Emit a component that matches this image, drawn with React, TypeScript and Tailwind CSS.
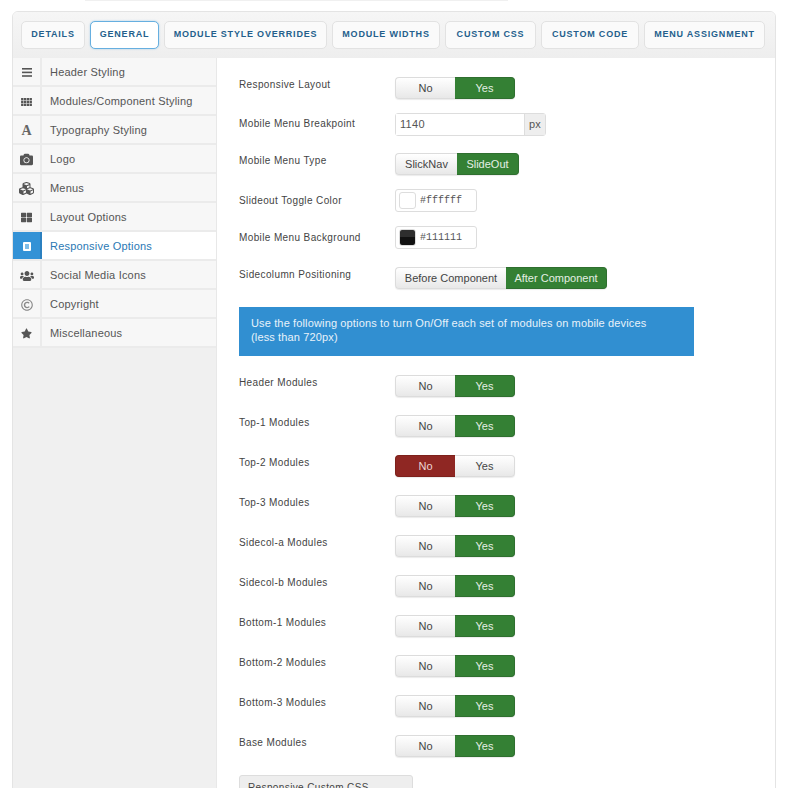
import { FaCamera, FaCubes, FaRegCopyright, FaStar, FaThLarge, FaUsers } from "react-icons/fa";

const TABS = [
  { label: "DETAILS", width: "w-[64px]" },
  { label: "GENERAL", width: "w-[69px]", active: true },
  { label: "MODULE STYLE OVERRIDES", width: "w-[163px]" },
  { label: "MODULE WIDTHS", width: "w-[108px]" },
  { label: "CUSTOM CSS", width: "w-[91px]" },
  { label: "CUSTOM CODE", width: "w-[98px]" },
  { label: "MENU ASSIGNMENT", width: "w-[121px]" },
];

function BarsIcon() {
  return (
    <svg width="10" height="9" viewBox="0 0 10 9" fill="currentColor">
      <rect y="0" width="10" height="1.6" />
      <rect y="3.6" width="10" height="1.6" />
      <rect y="7.2" width="10" height="1.6" />
    </svg>
  );
}

function GridIcon() {
  const cells = [];
  for (let row = 0; row < 3; row++) {
    for (let col = 0; col < 4; col++) {
      cells.push(<rect key={`${row}-${col}`} x={col * 3} y={row * 3} width="2.5" height="2.5" />);
    }
  }
  return (
    <svg width="11" height="8" viewBox="0 0 11.5 8.5" fill="currentColor">
      {cells}
    </svg>
  );
}

const MENU = [
  { label: "Header Styling", icon: <BarsIcon /> },
  { label: "Modules/Component Styling", icon: <GridIcon /> },
  { label: "Typography Styling", icon: <span className="font-['Liberation_Serif',serif] text-[14px] leading-none font-bold text-[#666666]">A</span> },
  { label: "Logo", icon: <FaCamera className="h-[13px] w-[13px]" /> },
  { label: "Menus", icon: <FaCubes className="h-[15px] w-[15px]" /> },
  { label: "Layout Options", icon: <FaThLarge className="h-[11px] w-[11px]" /> },
  { label: "Responsive Options", active: true, icon: <span className="block h-[9px] w-[8px] rounded-[1px] border-2 border-white bg-[#7fbde8]" /> },
  { label: "Social Media Icons", icon: <FaUsers className="h-[14px] w-[14px]" /> },
  { label: "Copyright", icon: <FaRegCopyright className="h-[12px] w-[12px] text-[#888888]" /> },
  { label: "Miscellaneous", icon: <FaStar className="h-[11px] w-[11px]" /> },
];

const MODULES = [
  { label: "Header Modules" },
  { label: "Top-1 Modules" },
  { label: "Top-2 Modules", off: true },
  { label: "Top-3 Modules" },
  { label: "Sidecol-a Modules" },
  { label: "Sidecol-b Modules" },
  { label: "Bottom-1 Modules" },
  { label: "Bottom-2 Modules" },
  { label: "Bottom-3 Modules" },
  { label: "Base Modules" },
];

const segBase = "flex h-[22px] items-center justify-center border text-[11px] whitespace-nowrap shadow-[0_1px_1px_rgba(0,0,0,0.08)]";
const segOff = "border-[#dcdcdc] bg-gradient-to-b from-[#ffffff] to-[#e8e8e8] text-[#444444]";
const segGreen = "border-[#2f6f2f] bg-[#348034] text-[#e4efe4]";
const segRed = "border-[#7d211b] bg-[#8f2723] text-[#ecd6d4]";

function Segmented({ left, right, leftW, rightW, on = "right", onClass = segGreen }: { left: string; right: string; leftW: string; rightW: string; on?: "left" | "right"; onClass?: string }) {
  return (
    <div className="flex">
      <div className={`${segBase} ${leftW} rounded-l-[4px] border-r-0 ${on === "left" ? onClass : segOff}`}>{left}</div>
      <div className={`${segBase} ${rightW} rounded-r-[4px] border-l-0 ${on === "right" ? onClass : segOff}`}>{right}</div>
    </div>
  );
}

function YesNo({ off }: { off?: boolean }) {
  return <Segmented left="No" right="Yes" leftW="w-[60px]" rightW="w-[60px]" on={off ? "left" : "right"} onClass={off ? segRed : segGreen} />;
}

function Label({ children, offset = "pt-[1px]" }: { children: string; offset?: string }) {
  return <div className={`w-[156px] shrink-0 text-[10px] leading-[13px] tracking-[0.38px] whitespace-nowrap text-[#444444] ${offset}`}>{children}</div>;
}

function ColorField({ swatch, value }: { swatch: string; value: string }) {
  return (
    <div className="flex h-[23px] w-[82px] items-center gap-[4px] rounded-[3px] border border-[#dddddd] bg-white pl-[3px]">
      <span className={`h-[17px] w-[17px] rounded-[3px] border border-[#dddddd] ${swatch}`} />
      <span className="font-['Liberation_Mono',monospace] text-[10px] text-[#555555]">{value}</span>
    </div>
  );
}

export default function App() {
  return (
    <div className="h-[788px] overflow-hidden bg-white font-['Liberation_Sans',Arial,sans-serif]">
      <div className="ml-[85px] h-[1px] w-[423px] bg-[#f0f0f0]" />
      <div className="mx-[12px] mt-[10px] h-[900px] rounded-t-[6px] border border-[#e4e4e4]">
        <div className="flex h-[46px] items-start gap-[5px] rounded-t-[5px] bg-gradient-to-b from-[#f6f6f6] to-[#eeeeee] pt-[9px] pl-[8px]">
          {TABS.map((tab) => (
            <div
              key={tab.label}
              className={`flex h-[28px] ${tab.width} items-center justify-center rounded-[5px] border text-[9px] font-bold tracking-[0.8px] whitespace-nowrap text-[#245f8c] ${tab.active ? "border-[#66afe0] bg-white shadow-[0_0_2px_rgba(102,175,224,0.6)]" : "border-[#e2e2e2] bg-[#fafafa]"}`}
            >
              {tab.label}
            </div>
          ))}
        </div>
        <div className="flex h-[854px]">
          <div className="w-[204px] shrink-0 border-r border-[#e8e8e8] bg-[#f0f0f0]">
            {MENU.map((item) => (
              <div key={item.label} className={`flex h-[29px] border-b-2 border-[#ebebeb] text-[11px] ${item.active ? "bg-white text-[#2a78b4]" : "bg-[#f7f7f7] text-[#555555]"}`}>
                <div className={`flex w-[29px] shrink-0 items-center justify-center border-r-2 pt-[2px] ${item.active ? "border-[#2b80c0] bg-[#3392d6]" : "border-[#ebebeb] text-[#555555]"}`}>
                  {item.icon}
                </div>
                <div className="flex items-center pt-[2px] pl-[8px] tracking-[0.2px] whitespace-nowrap">{item.label}</div>
              </div>
            ))}
          </div>
          <div className="min-w-0 flex-1 pt-[19px] pl-[22px]">
            <div className="flex h-[22px]">
              <Label>Responsive Layout</Label>
              <YesNo />
            </div>
            <div className="mt-[14px] flex">
              <Label offset="pt-[4px]">Mobile Menu Breakpoint</Label>
              <div className="flex h-[23px] rounded-[3px] border border-[#dddddd] text-[11px] tracking-[0.3px] text-[#555555]">
                <div className="flex w-[128px] items-center bg-white pl-[4px]">1140</div>
                <div className="flex w-[21px] items-center justify-center border-l border-[#dddddd] bg-[#eeeeee]">px</div>
              </div>
            </div>
            <div className="mt-[17px] flex">
              <Label>Mobile Menu Type</Label>
              <Segmented left="SlickNav" right="SlideOut" leftW="w-[62px]" rightW="w-[62px]" />
            </div>
            <div className="mt-[14px] flex">
              <Label offset="pt-[5px]">Slideout Toggle Color</Label>
              <ColorField swatch="bg-white" value="#ffffff" />
            </div>
            <div className="mt-[14px] flex">
              <Label offset="pt-[5px]">Mobile Menu Background</Label>
              <ColorField swatch="bg-[linear-gradient(#2e2e2e_50%,#111111_50%)]" value="#111111" />
            </div>
            <div className="mt-[18px] flex">
              <Label>Sidecolumn Positioning</Label>
              <Segmented left="Before Component" right="After Component" leftW="w-[111px]" rightW="w-[101px]" />
            </div>
            <div className="mt-[18px] h-[49px] w-[455px] bg-[#318fd1] px-[12px] pt-[9px] text-[11px] leading-[14px] tracking-[0.14px] text-[#e8f2fa]">
              Use the following options to turn On/Off each set of modules on mobile devices
              <br />
              (less than 720px)
            </div>
            <div className="mt-[19px] flex flex-col gap-[18px]">
              {MODULES.map((row) => (
                <div key={row.label} className="flex">
                  <Label>{row.label}</Label>
                  <YesNo off={row.off} />
                </div>
              ))}
            </div>
            <div className="mt-[18px] h-[30px] w-[174px] rounded-t-[3px] border border-[#dddddd] bg-[#eeeeee] pt-[4px] pl-[8px] text-[10px] tracking-[0.38px] text-[#444444]">
              Responsive Custom CSS
            </div>
          </div>
        </div>
      </div>
    </div>
  );
}
